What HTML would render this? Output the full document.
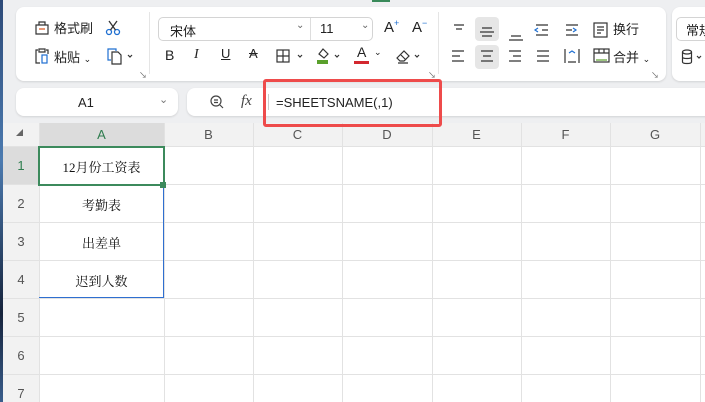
<!DOCTYPE html><html><head><meta charset="utf-8"><style>
*{margin:0;padding:0;box-sizing:border-box}
body{width:705px;height:402px;overflow:hidden;background:#eeeff1;position:relative;font-family:"Liberation Sans","Noto Sans CJK SC",sans-serif;color:#222}
.a{position:absolute}
.panel{background:#fff;border-radius:8px;box-shadow:0 1px 2px rgba(0,0,0,.12)}
.t{position:absolute;font-size:13px;white-space:nowrap}
.box{position:absolute;border:1px solid #d4d4d4;border-radius:5px;background:#fff}
.hl{position:absolute;background:#e6e6e6;border-radius:4px}
.vl{position:absolute;width:1px;background:#e2e2e2}
.hz{position:absolute;height:1px;background:#e2e2e2}
.ch{position:absolute;top:123px;height:23px;font-size:13px;color:#555;text-align:center;line-height:23px}
.rh{position:absolute;left:3px;width:36px;font-size:13px;color:#555;text-align:center}
.cell{position:absolute;left:39px;width:125px;text-align:center;font-size:13px;font-family:"Liberation Serif","Noto Serif CJK SC",serif;color:#111}
</style></head><body>
<div class="a" style="left:0;top:0;width:3px;height:402px;background:linear-gradient(#2d4a78,#4c7bb0 40%,#16233b 78%,#3a5e8c)"></div>
<div class="a" style="left:372px;top:0;width:18px;height:2px;background:#3a8a5a"></div>
<div class="panel a" style="left:16px;top:7px;width:650px;height:74px"></div>
<div class="panel a" style="left:672px;top:7px;width:40px;height:74px"></div>
<svg class="a" style="left:33px;top:19px" width="18" height="18" viewBox="0 0 18 18" fill="none" stroke="#333" stroke-width="1.2"><path d="M3 6h12v9H3z M6 6V3h6v3"/><path d="M6 10h6" stroke="#d9541c"/></svg>
<div class="t" style="left:54px;top:18px">格式刷</div>
<svg class="a" style="left:104px;top:19px" width="18" height="18" viewBox="0 0 18 18" fill="none" stroke="#1f6fd1" stroke-width="1.3"><circle cx="5" cy="13" r="2.5"/><circle cx="13" cy="13" r="2.5"/><path d="M6.5 11L13 2M11.5 11L5 2" stroke="#333"/></svg>
<svg class="a" style="left:33px;top:47px" width="18" height="18" viewBox="0 0 18 18" fill="none" stroke="#333" stroke-width="1.2"><path d="M5 3H3v13h4M13 3h2v4"/><path d="M6 2h6v3H6z"/><rect x="9" y="8" width="5" height="8" stroke="#1f6fd1"/></svg>
<div class="t" style="left:54px;top:47px">粘贴 <span style="font-size:9px">⌄</span></div>
<svg class="a" style="left:106px;top:47px" width="28" height="18" viewBox="0 0 28 18" fill="none" stroke-width="1.2"><path d="M5 13H2V2h8v2" stroke="#1f6fd1"/><path d="M6 5h6l3 3v9H6z" stroke="#333"/><path d="M22 8l2 2 2-2" stroke="#333"/></svg>
<div class="t" style="left:139px;top:70px;font-size:8px;color:#666">↘</div>
<div class="vl" style="left:149px;top:12px;height:62px;background:#e5e5e5"></div>
<div class="box" style="left:158px;top:17px;width:215px;height:24px"></div>
<div class="vl" style="left:310px;top:18px;height:22px;background:#ddd"></div>
<div class="t" style="left:170px;top:21px">宋体</div>
<div class="t" style="left:296px;top:20px;font-size:10px;color:#666">⌄</div>
<div class="t" style="left:320px;top:21px">11</div>
<div class="t" style="left:361px;top:20px;font-size:10px;color:#666">⌄</div>
<div class="t" style="left:384px;top:18px;font-size:15px">A<sup style="font-size:9px;color:#1f6fd1">+</sup></div>
<div class="t" style="left:412px;top:18px;font-size:15px">A<sup style="font-size:9px;color:#1f6fd1">−</sup></div>
<div class="t" style="left:165px;top:47px;font-size:14px">B</div>
<div class="t" style="left:194px;top:47px;font-size:14px;font-style:italic;font-family:'Liberation Serif'">I</div>
<div class="t" style="left:221px;top:46px;font-size:13px;text-decoration:underline">U</div>
<div class="t" style="left:249px;top:46px;font-size:13px;text-decoration:line-through">A</div>
<svg class="a" style="left:276px;top:48px" width="30" height="16" viewBox="0 0 30 16" fill="none" stroke="#333" stroke-width="1.2"><rect x="1" y="2" width="12" height="12"/><path d="M7 2v12M1 8h12M22 7l2 2 2-2"/></svg>
<svg class="a" style="left:315px;top:46px" width="30" height="20" viewBox="0 0 30 20" fill="none" stroke-width="1.2"><path d="M4 8l4-5 5 5-4 4z" stroke="#333"/><rect x="2" y="14" width="11" height="4" fill="#5aa02c" stroke="none"/><path d="M20 9l2 2 2-2" stroke="#333"/></svg>
<div class="t" style="left:357px;top:44px;font-size:14px">A</div>
<div class="a" style="left:354px;top:61px;width:15px;height:3px;background:#d3282f"></div>
<div class="t" style="left:374px;top:47px;font-size:9px">⌄</div>
<svg class="a" style="left:395px;top:47px" width="30" height="18" viewBox="0 0 30 18" fill="none" stroke="#333" stroke-width="1.2"><path d="M2 11l7-7 5 5-5 5H5z M6 8l5 5M3 16h10M20 8l2 2 2-2"/></svg>
<div class="t" style="left:428px;top:70px;font-size:8px;color:#666">↘</div>
<div class="vl" style="left:438px;top:12px;height:62px;background:#e5e5e5"></div>
<div class="hl" style="left:475px;top:17px;width:24px;height:24px"></div>
<div class="hl" style="left:475px;top:45px;width:24px;height:24px"></div>
<svg class="a" style="left:450px;top:20px" width="180" height="48" viewBox="0 0 180 48" fill="none" stroke="#333" stroke-width="1.2">
<path d="M4 5h10M6 9h6"/><path d="M32 8h10M30 12h14M32 16h10"/><path d="M61 16h10M59 20h14"/>
<path d="M86 5h12M92 10h6M86 15h12" /><path d="M88 8l-3 2 3 2" stroke="#1f6fd1"/>
<path d="M116 5h12M116 10h6M116 15h12"/><path d="M123 8l3 2-3 2" stroke="#1f6fd1"/>
<rect x="144" y="3" width="13" height="14"/><path d="M147 7h7M147 10h7M147 13h4"/>
<path d="M2 31h12M2 36h8M2 41h12"/><path d="M31 31h12M33 36h8M31 41h12"/><path d="M59 31h12M63 36h8M59 41h12"/><path d="M87 31h12M87 36h12M87 41h12"/>
<path d="M115 29v14M129 29v14M118 42h8"/><path d="M119 33l3-2 3 2" stroke="#1f6fd1"/>
<rect x="144" y="29" width="15" height="13"/><path d="M144 33h15M149 29v4M154 29v4"/><path d="M146 40h11" stroke="#5aa02c"/></svg>
<div class="t" style="left:613px;top:19px">换行</div>
<div class="t" style="left:613px;top:47px">合并 <span style="font-size:9px">⌄</span></div>
<div class="t" style="left:651px;top:70px;font-size:8px;color:#666">↘</div>
<div class="box" style="left:676px;top:17px;width:40px;height:24px"></div>
<div class="t" style="left:686px;top:20px">常规</div>
<svg class="a" style="left:681px;top:49px" width="24" height="16" viewBox="0 0 24 16" fill="none" stroke="#333" stroke-width="1.2"><ellipse cx="6" cy="3" rx="4.5" ry="2"/><path d="M1.5 3v10c0 2 9 2 9 0V3M1.5 8c0 2 9 2 9 0M16 7l2 2 2-2"/></svg>
<div class="panel a" style="left:16px;top:88px;width:162px;height:28px"></div>
<div class="t" style="left:78px;top:95px">A1</div>
<div class="t" style="left:159px;top:93px;font-size:11px;color:#777">⌄</div>
<div class="panel a" style="left:187px;top:88px;width:530px;height:28px"></div>
<svg class="a" style="left:209px;top:94px" width="16" height="16" viewBox="0 0 16 16" fill="none" stroke="#444" stroke-width="1.2"><circle cx="7" cy="7" r="5"/><path d="M5 6h4M5 8.5h4M11 11l3 3"/></svg>
<div class="t" style="left:241px;top:93px;font-family:'Liberation Serif';font-style:italic;font-size:15px;color:#444">fx</div>
<div class="vl" style="left:268px;top:94px;height:16px;background:#ccc"></div>
<div class="t" style="left:276px;top:95px">=SHEETSNAME(,1)</div>
<div class="a" style="left:3px;top:123px;width:702px;height:279px;background:#fff"></div>
<div class="a" style="left:3px;top:123px;width:702px;height:23px;background:#f2f2f2"></div>
<div class="a" style="left:3px;top:123px;width:36px;height:279px;background:#f2f2f2"></div>
<div class="a" style="left:39px;top:123px;width:125px;height:23px;background:#dcdcdc"></div>
<div class="a" style="left:3px;top:146px;width:36px;height:38px;background:#dcdcdc"></div>
<div class="t" style="left:16px;top:128px;font-size:7px;color:#666">◢</div>
<div class="ch" style="left:39px;width:125px;color:#2f7d4f">A</div>
<div class="ch" style="left:164px;width:89px">B</div><div class="ch" style="left:253px;width:89px">C</div>
<div class="ch" style="left:342px;width:90px">D</div><div class="ch" style="left:432px;width:89px">E</div>
<div class="ch" style="left:521px;width:89px">F</div><div class="ch" style="left:610px;width:90px">G</div>
<div class="vl" style="left:39px;top:123px;height:279px"></div><div class="vl" style="left:164px;top:123px;height:279px"></div>
<div class="vl" style="left:253px;top:123px;height:279px"></div><div class="vl" style="left:342px;top:123px;height:279px"></div>
<div class="vl" style="left:432px;top:123px;height:279px"></div><div class="vl" style="left:521px;top:123px;height:279px"></div>
<div class="vl" style="left:610px;top:123px;height:279px"></div><div class="vl" style="left:700px;top:123px;height:279px"></div>
<div class="hz" style="left:3px;top:146px;width:702px"></div><div class="hz" style="left:3px;top:184px;width:702px"></div>
<div class="hz" style="left:3px;top:222px;width:702px"></div><div class="hz" style="left:3px;top:260px;width:702px"></div>
<div class="hz" style="left:3px;top:298px;width:702px"></div><div class="hz" style="left:3px;top:336px;width:702px"></div>
<div class="hz" style="left:3px;top:374px;width:702px"></div>
<div class="rh" style="top:158px;color:#2f7d4f">1</div><div class="rh" style="top:196px">2</div><div class="rh" style="top:234px">3</div>
<div class="rh" style="top:272px">4</div><div class="rh" style="top:310px">5</div><div class="rh" style="top:348px">6</div><div class="rh" style="top:386px">7</div>
<div class="a" style="left:39px;top:146px;width:125px;height:152px;border-right:1px solid #2f6fd0;border-bottom:1px solid #2f6fd0"></div>
<div class="a" style="left:38px;top:146px;width:127px;height:40px;border:2px solid #3c8a5c;z-index:2"></div>
<div class="a" style="left:160px;top:182px;width:6px;height:6px;background:#3c8a5c;z-index:3"></div>
<div class="cell" style="top:157px">12月份工资表</div>
<div class="cell" style="top:195px">考勤表</div>
<div class="cell" style="top:233px">出差单</div>
<div class="cell" style="top:271px">迟到人数</div>
<div class="a" style="left:263px;top:79px;width:179px;height:48px;border:3px solid #ee4b4b;border-radius:3px;z-index:5"></div>
</body></html>
